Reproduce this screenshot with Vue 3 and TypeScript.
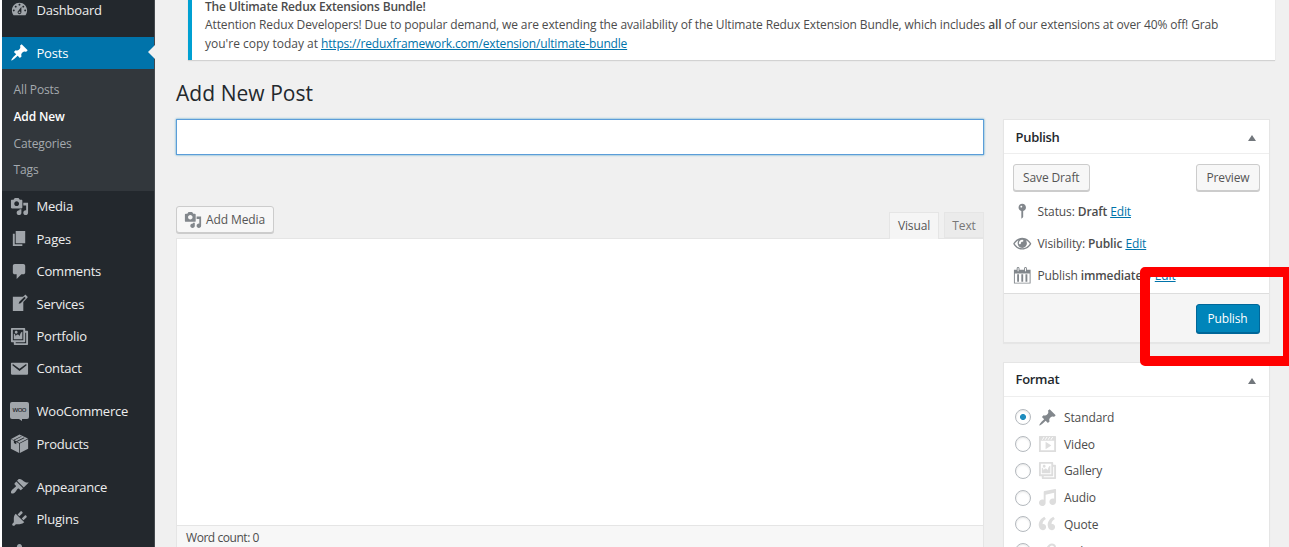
<script setup lang="ts">
import { ref } from 'vue'

interface MenuItem {
  label: string
  icon: string
  current?: boolean
  separatorAfter?: boolean
  children?: string[]
}

// 20x20 icon outlines
const icons: Record<string, string> = {
  dashboard: 'M3.76 16h12.48c1.1-1.37 1.76-3.11 1.76-5 0-4.42-3.58-8-8-8s-8 3.58-8 8c0 1.89.66 3.63 1.76 5zM10 4c.55 0 1 .45 1 1s-.45 1-1 1-1-.45-1-1 .45-1 1-1zM6 6c.55 0 1 .45 1 1s-.45 1-1 1-1-.45-1-1 .45-1 1-1zm8 0c.55 0 1 .45 1 1s-.45 1-1 1-1-.45-1-1 .45-1 1-1zm-5.37 5.55L12 7v6c0 1.1-.9 2-2 2s-2-.9-2-2c0-.57.24-1.08.63-1.45zM4 10c.55 0 1 .45 1 1s-.45 1-1 1-1-.45-1-1 .45-1 1-1zm12 0c.55 0 1 .45 1 1s-.45 1-1 1-1-.45-1-1 .45-1 1-1zm-5 3c0-.55-.45-1-1-1s-1 .45-1 1 .45 1 1 1 1-.45 1-1z',
  pin: 'M10.44 3.02l1.82-1.82 6.36 6.35-1.83 1.82c-1.05-.68-2.48-.57-3.41.36l-.75.75c-.92.93-1.04 2.35-.35 3.41l-1.83 1.82-2.41-2.41-2.8 2.79c-.42.42-3.38 2.71-3.8 2.29s1.86-3.39 2.28-3.81l2.79-2.79L4.1 9.36l1.83-1.82c1.05.69 2.48.57 3.4-.36l.75-.75c.93-.92 1.05-2.35.36-3.41z',
  media: 'M13 11V4c0-.55-.45-1-1-1h-1.67L9 1H5L3.67 3H2c-.55 0-1 .45-1 1v7c0 .55.45 1 1 1h10c.55 0 1-.45 1-1zM7 4.5c1.38 0 2.5 1.12 2.5 2.5S8.38 9.5 7 9.5 4.5 8.38 4.5 7 5.62 4.5 7 4.5zM14 6h5v10.5c0 1.38-1.12 2.5-2.5 2.5S14 17.88 14 16.5s1.12-2.5 2.5-2.5c.17 0 .34.02.5.05V9h-3V6zm-4 8.05V13h2v3.5c0 1.38-1.12 2.5-2.5 2.5S7 17.88 7 16.5 8.12 14 9.5 14c.17 0 .34.02.5.05z',
  page: 'M6 15V2h10v13H6zm-1 1h8v2H3V5h2v11z',
  comments: 'M5 2h9c1.1 0 2 .9 2 2v7c0 1.1-.9 2-2 2h-2l-5 5v-5H5c-1.1 0-2-.9-2-2V4c0-1.1.9-2 2-2z',
  write: 'M16.89 1.2l1.41 1.41c.39.39.39 1.02 0 1.41L14 8.33V18H3V3h10.67l1.8-1.8c.4-.39 1.03-.4 1.42 0zm-5.66 8.48l5.37-5.36-1.42-1.42-5.36 5.37-.71 2.12z',
  gallery: 'M16 4h1.96c.57 0 1.04.47 1.04 1.04v12.92c0 .57-.47 1.04-1.04 1.04H5.04C4.47 19 4 18.53 4 17.96V16H2.04C1.47 16 1 15.53 1 14.96V2.04C1 1.47 1.47 1 2.04 1h12.92c.57 0 1.04.47 1.04 1.04V4zM3 14h11V3H3v11zm5-8.5C8 4.67 7.33 4 6.5 4S5 4.67 5 5.5 5.67 7 6.5 7 8 6.33 8 5.5zm2 4.5s1-5 3-5v8H4V7c2 0 2 3 2 3s.33-2 2-2 2 2 2 2zm7 7V6h-1v8.96c0 .57-.47 1.04-1.04 1.04H6v1h11z',
  email: 'M2 4h16c.55 0 1 .45 1 1v10.5c0 .55-.45 1-1 1H2c-.55 0-1-.45-1-1V5c0-.55.45-1 1-1zm8 8.7l7.2-5.9c.3-.3.4-.7.1-1-.3-.4-.8-.4-1.1-.1L10 10.2 3.8 5.7c-.35-.3-.85-.25-1.1.1-.3.3-.2.7.1 1z',
  products: 'M10 .4l8.9 4.4L10 9.4 7.6 8.2l7.9-4-.9-.5-8 4-2-1 7.900-4-.9-.4-8 3.900-2.400-1zM.9 5.500l3.200 1.700v2.300l2.500 1.400V8.500l3 1.500v9.900L.9 15.600zm18.200 0v10.100l-8.700 4.300V10z',
  appearance: 'M14.48 11.06L7.41 3.99l1.5-1.5c.5-.56 2.3-.47 3.51.32 1.21.8 1.43 1.28 2.91 2.1 1.18.64 2.45 1.26 4.45.85zm-.71.71L6.7 4.7 4.93 6.47c-.39.39-.39 1.02 0 1.41l1.06 1.06c.39.39.39 1.03 0 1.42-.6.6-1.43 1.11-2.21 1.69-.35.26-.7.53-1.01.84C1.43 14.23.4 16.08 1.4 17.07c.99 1 2.84-.03 4.18-1.36.31-.31.58-.66.85-1.02.57-.78 1.08-1.61 1.69-2.21.39-.39 1.02-.39 1.41 0l1.06 1.06c.39.39 1.02.39 1.41 0z',
  plugins: 'M13.11 4.36L9.87 7.6 8 5.73l3.24-3.24c.35-.34 1.05-.2 1.56.32.52.51.66 1.21.31 1.55zm-8 1.77l.91-1.12 9.01 9.01-1.19.84c-.71.71-2.63 1.16-3.82 1.16H6.14L4.9 17.26c-.59.59-1.54.59-2.12 0-.59-.58-.59-1.53 0-2.12l1.24-1.24v-3.88c0-1.13.4-3.19 1.09-3.89zm7.26 3.97l3.24-3.24c.34-.35 1.04-.21 1.55.31.52.51.66 1.21.31 1.55l-3.24 3.25z',
  users: 'M10 9.25c-2.27 0-2.73-3.44-2.73-3.44C7 4.02 7.82 2 9.97 2c2.16 0 2.98 2.02 2.71 3.81 0 0-.41 3.44-2.68 3.44zm0 2.57L12.72 10c2.39 0 4.52 2.33 4.52 4.53v2.49s-3.65 1.13-7.24 1.13c-3.65 0-7.24-1.13-7.24-1.13v-2.49c0-2.25 1.94-4.48 4.47-4.48z',
  status: 'M14 6c0 1.86-1.28 3.41-3 3.86V16c0 1-2 2-2 2V9.86c-1.72-.45-3-2-3-3.86 0-2.21 1.79-4 4-4s4 1.79 4 4zM8 5c0 .55.45 1 1 1s1-.45 1-1-.45-1-1-1-1 .45-1 1z',
  visibility: 'M10 4C5.5 4 2 7 .2 10.5 2 14 5.5 16.8 10 16.8s8-2.8 9.8-6.3C18 7 14.5 4 10 4zM6 6.7A5.2 5.2 0 0 0 5 10c0 2.8 2.2 5 5 5s5-2.2 5-5c0-1.200-.4-2.400-1-3.300 1.700.9 3.200 2.200 4.200 3.800-1.700 2.800-4.700 4.900-8.200 4.900s-6.500-2.100-8.200-4.900C2.800 8.900 4.300 7.600 6 6.700zm4-.4c.8 0 1.200.4 1.200 1s-.5 1.100-1.200 1.100c-.8 0-1.500.7-1.500 1.500 0 .7-.5 1.200-1.100 1.200s-1-.5-1-1.200c0-2 1.600-3.600 3.600-3.600z',
  calendar: 'M15 4h4v15H1V4h3V2.5C4 1.67 4.67 1 5.5 1S7 1.67 7 2.5V4h5V2.5c0-.83.67-1.5 1.5-1.5s1.5.67 1.5 1.5zM5 2.5V5.5c0 .28.22.5.5.5s.5-.22.5-.5V2.5c0-.28-.22-.5-.5-.5s-.5.22-.5.5zm8 0V5.5c0 .28.22.5.5.5s.5-.22.5-.5V2.5c0-.28-.22-.5-.5-.5s-.5.22-.5.5zM18 18V8H2v10zM6.500 17V9h-2v8zm4.500 0V9H9v8zm4.500 0V9h-2v8z',
  video: 'M2 1h16c.55 0 1 .45 1 1v16l-18-.02V2c0-.55.45-1 1-1zm4 1L4 5h1l2-3H6zm4 0H9L7 5h1zm3 0h-1l-2 3h1zm3 0h-1l-2 3h1zm1 14V6H3v10h14zM8 7l6 4-6 4V7z',
  audio: 'M6.99 3.08l11.02-2c.55-.08.99.45.99 1V14.5c0 1.94-1.57 3.5-3.5 3.5S12 16.44 12 14.5c0-1.93 1.57-3.5 3.5-3.5.54 0 1.04.14 1.5.35V5.08l-9 2V16c-.24 1.7-1.74 3-3.5 3C2.57 19 1 17.44 1 15.5 1 13.57 2.57 12 4.5 12c.54 0 1.04.14 1.5.35V4.08c0-.55.44-.91.99-1z',
  quote: 'M8.54 12.74c0-.87-.24-1.61-.72-2.22-.73-.92-2.14-1.03-2.96-.85-.34-1.93 1.3-4.39 3.42-5.45L6.65 1.94C3.45 3.46.31 6.96.85 11.37 1.19 14.16 2.8 16 5.08 16c1 0 1.83-.29 2.48-.88.66-.59.98-1.38.98-2.38zm9.43 0c0-.87-.24-1.61-.72-2.22-.73-.92-2.14-1.03-2.96-.85-.34-1.93 1.3-4.39 3.42-5.45l-1.63-2.28c-3.2 1.52-6.34 5.02-5.8 9.43.34 2.79 1.95 4.63 4.23 4.63 1 0 1.83-.29 2.48-.88.66-.59.98-1.38.98-2.38z',
  link: 'M17.74 2.76c1.68 1.69 1.68 4.41 0 6.1l-1.53 1.52c-1.12 1.12-2.7 1.47-4.14 1.09l2.62-2.61.76-.77.76-.76c.84-.84.84-2.2 0-3.04-.84-.85-2.2-.85-3.04 0l-.77.76-3.38 3.38c-.37-1.44-.02-3.02 1.1-4.14l1.52-1.53c1.69-1.68 4.42-1.68 6.1 0zM8.59 13.43l5.34-5.34c.42-.42.42-1.1 0-1.52-.44-.43-1.13-.39-1.53 0l-5.33 5.34c-.42.42-.42 1.1 0 1.52.44.43 1.13.39 1.52 0zm-.76 2.29l4.14-4.15c.38 1.44.03 3.02-1.09 4.14l-1.52 1.53c-1.69 1.68-4.41 1.68-6.1 0-1.68-1.68-1.68-4.42 0-6.1l1.53-1.52c1.12-1.12 2.7-1.47 4.14-1.1l-4.14 4.15c-.85.84-.85 2.2 0 3.05.84.84 2.2.84 3.04 0z'
}

const menu: MenuItem[] = [
  { label: 'Dashboard', icon: 'dashboard', separatorAfter: true },
  { label: 'Posts', icon: 'pin', current: true, children: ['All Posts', 'Add New', 'Categories', 'Tags'] },
  { label: 'Media', icon: 'media' },
  { label: 'Pages', icon: 'page' },
  { label: 'Comments', icon: 'comments' },
  { label: 'Services', icon: 'write' },
  { label: 'Portfolio', icon: 'gallery' },
  { label: 'Contact', icon: 'email', separatorAfter: true },
  { label: 'WooCommerce', icon: 'woo' },
  { label: 'Products', icon: 'products', separatorAfter: true },
  { label: 'Appearance', icon: 'appearance' },
  { label: 'Plugins', icon: 'plugins' },
  { label: 'Users', icon: 'users' }
]

const formats = [
  { label: 'Standard', icon: 'pin' },
  { label: 'Video', icon: 'video' },
  { label: 'Gallery', icon: 'gallery' },
  { label: 'Audio', icon: 'audio' },
  { label: 'Quote', icon: 'quote' },
  { label: 'Link', icon: 'link' }
]

const title = ref('')
const format = ref('Standard')
const activePage = 'Add New'
</script>

<template>
  <div class="admin">
    <nav class="menu">
      <template v-for="item in menu" :key="item.label">
        <a class="menu-item" :class="{ 'menu-item--current': item.current }">
          <span class="menu-icon">
            <span v-if="item.icon === 'woo'" class="woo">WOO</span>
            <svg v-else viewBox="0 0 20 20"><path fill-rule="evenodd" :d="icons[item.icon]" /></svg>
          </span>
          {{ item.label }}
        </a>
        <div v-if="item.children" class="submenu">
          <a
            v-for="child in item.children"
            :key="child"
            :class="{ active: child === activePage }"
          >{{ child }}</a>
        </div>
        <div v-if="item.separatorAfter" class="separator"></div>
      </template>
    </nav>

    <main class="content">
      <div class="notice">
        <strong>The Ultimate Redux Extensions Bundle!</strong><br>
        <span>Attention Redux Developers! Due to popular demand, we are extending the availability of the Ultimate Redux Extension Bundle, which includes <b>all</b> of our extensions at over 40% off! Grab</span><br>
        <span class="notice-copy">you're copy today at</span> <a class="link notice-link">https://reduxframework.com/extension/ultimate-bundle</a>
      </div>

      <h1>Add New Post</h1>

      <div class="columns">
        <section class="editor-column">
          <input v-model="title" class="title" type="text">
          <div class="tools">
            <button class="button add-media">
              <svg viewBox="0 0 20 20"><path fill-rule="evenodd" :d="icons.media" /></svg>
              Add Media
            </button>
            <div class="tabs">
              <span class="tab tab--active">Visual</span>
              <span class="tab">Text</span>
            </div>
          </div>
          <div class="editor">
            <div class="editor-body"></div>
            <div class="editor-status">Word count: 0</div>
          </div>
        </section>

        <aside class="side-column">
          <div class="box">
            <h2>Publish <i class="toggle"></i></h2>
            <div class="publish-actions">
              <button class="button">Save Draft</button>
              <button class="button">Preview</button>
            </div>
            <div class="publish-row">
              <svg viewBox="0 0 20 20"><path fill-rule="evenodd" :d="icons.status" /></svg>
              <span>Status: <b>Draft</b> <a class="link">Edit</a></span>
            </div>
            <div class="publish-row">
              <svg viewBox="0 0 20 20"><path fill-rule="evenodd" :d="icons.visibility" /></svg>
              <span>Visibility: <b>Public</b> <a class="link">Edit</a></span>
            </div>
            <div class="publish-row">
              <svg viewBox="0 0 20 20"><path fill-rule="evenodd" :d="icons.calendar" /></svg>
              <span>Publish <b>immediately</b> <a class="link">Edit</a></span>
            </div>
            <div class="publish-footer">
              <button class="button button--primary">Publish</button>
            </div>
          </div>

          <div class="box">
            <h2>Format <i class="toggle"></i></h2>
            <div class="formats">
              <label
                v-for="item in formats"
                :key="item.label"
                :class="{ selected: item.label === format }"
              >
                <input v-model="format" type="radio" :value="item.label">
                <svg viewBox="0 0 20 20"><path fill-rule="evenodd" :d="icons[item.icon]" /></svg>
                {{ item.label }}
              </label>
            </div>
          </div>
        </aside>
      </div>
    </main>

    <div class="highlight"></div>
  </div>
</template>

<style>
body {
  background: #fff;
}
</style>

<style scoped>
* {
  box-sizing: border-box;
}

.admin {
  position: relative;
  display: flex;
  width: 1289px;
  height: 547px;
  padding-left: 2px;
  overflow: hidden;
  background: linear-gradient(90deg, #fff 2px, #f0f0f0 2px);
  color: #4c4c4c;
  font-family: "Open Sans", "Noto Sans", sans-serif;
  font-size: 12px;
  letter-spacing: -0.12px;
}

svg {
  flex: none;
  width: 19px;
  height: 19px;
  fill: #82878c;
}

.menu {
  flex: none;
  width: 153px;
  height: 560px;
  margin-top: -6px;
  background: #23282d;
  border-right: 1px solid #44494e;
}

.menu-item {
  display: flex;
  align-items: center;
  height: 32.4px;
  padding-bottom: 1px;
  color: #eee;
  font-size: 13px;
  letter-spacing: -0.2px;
}

.menu-item--current {
  position: relative;
  background: #0073aa;
  color: #fff;
}

.menu-item--current::after {
  content: "";
  position: absolute;
  top: 8.5px;
  right: -1px;
  border: 7.6px solid transparent;
  border-left-width: 0;
  border-right-color: #f0f0f0;
}

.menu-icon {
  display: flex;
  flex: none;
  justify-content: center;
  width: 34.5px;
}

.menu-icon svg {
  fill: #a0a5aa;
}

.menu-item--current svg {
  fill: #fff;
}

.woo {
  position: relative;
  width: 19px;
  height: 17px;
  margin-bottom: 1px;
  border-radius: 2px;
  background: #a0a5aa;
  color: #23282d;
  font-size: 6px;
  font-weight: 600;
  line-height: 17px;
  letter-spacing: -0.6px;
  text-align: center;
}

.woo::after {
  content: "";
  position: absolute;
  top: 17px;
  left: 9px;
  border-top: 2px solid #a0a5aa;
  border-left: 3px solid transparent;
}

.submenu {
  padding: 7.8px 0 6.5px;
  background: #32373c;
}

.submenu a {
  display: block;
  height: 26.8px;
  padding-left: 11.5px;
  color: #a5aaaf;
  line-height: 26.8px;
}

.submenu .active {
  color: #fff;
  font-weight: 600;
}

.separator {
  height: 10.5px;
}

.content {
  flex: 1;
  padding-left: 21px;
}

.notice {
  width: 1087px;
  height: 66px;
  margin: -6px 0 0 12px;
  padding: 3.5px 0 0 13px;
  border-left: 4px solid #00a0d2;
  background: #fff;
  box-shadow: 0 1px 1px rgba(0, 0, 0, 0.12);
  line-height: 18.5px;
  white-space: nowrap;
}

.notice strong,
b {
  font-weight: 600;
}

.notice strong {
  letter-spacing: -0.18px;
}

.notice-copy {
  letter-spacing: 0;
}

.notice-link {
  letter-spacing: -0.17px;
}

.link {
  color: #0073aa;
  text-decoration: underline;
}

h1 {
  margin: 18px 0 0;
  height: 41px;
  color: #23282d;
  font-size: 21px;
  font-weight: 400;
  line-height: 31px;
  letter-spacing: 0.05px;
}

.columns {
  display: flex;
  gap: 19px;
}

.editor-column {
  width: 808px;
}

.title {
  display: block;
  width: 808px;
  height: 36px;
  padding: 3px 8px;
  border: 1px solid #5b9dd9;
  outline: none;
  background: #fff;
  box-shadow: 0 0 2px rgba(30, 140, 190, 0.8);
  font: inherit;
  font-size: 20px;
}

.tools {
  display: flex;
  align-items: flex-start;
  justify-content: space-between;
  margin-top: 51px;
  height: 32px;
}

.button {
  display: flex;
  align-items: center;
  justify-content: center;
  height: 27px;
  padding: 0 9px;
  border: 1px solid #ccc;
  border-radius: 3px;
  background: #f7f7f7;
  box-shadow: 0 1px 0 #ccc;
  color: #555;
  font: inherit;
  letter-spacing: inherit;
  white-space: nowrap;
}

.add-media {
  gap: 4px;
  width: 98px;
  padding: 0 1px 0 0;
}

.add-media svg {
  width: 18px;
  height: 18px;
}

.tabs {
  display: flex;
  gap: 5px;
  margin-top: 6px;
}

.tab {
  width: 40px;
  height: 26px;
  border: 1px solid #e5e5e5;
  background: #ebebeb;
  color: #777;
  line-height: 26px;
  text-align: center;
}

.tab--active {
  position: relative;
  width: 50px;
  height: 27px;
  border-bottom: 0;
  background: #f5f5f5;
  color: #555;
}

.editor {
  border: 1px solid #e5e5e5;
  background: #fff;
}

.editor-body {
  height: 286px;
}

.editor-status {
  height: 40px;
  padding-left: 9px;
  border-top: 1px solid #e5e5e5;
  background: #f7f7f7;
  line-height: 24px;
  letter-spacing: -0.45px;
}

.side-column {
  width: 267px;
}

.box {
  margin-bottom: 19px;
  border: 1px solid #e5e5e5;
  background: #fff;
  box-shadow: 0 1px 1px rgba(0, 0, 0, 0.04);
}

h2 {
  display: flex;
  align-items: center;
  justify-content: space-between;
  height: 34px;
  margin: 0 0 10px;
  padding: 0 13px 0 11.5px;
  border-bottom: 1px solid #eee;
  color: #23282d;
  font-size: 13px;
  font-weight: 600;
  letter-spacing: -0.3px;
}

.toggle {
  margin-top: 3px;
  border: 4px solid transparent;
  border-top-width: 0;
  border-bottom: 6px solid #72777c;
}

.publish-actions {
  display: flex;
  justify-content: space-between;
  height: 31px;
  padding: 0 9.5px 0 9px;
}

.publish-row {
  display: flex;
  align-items: center;
  gap: 6px;
  height: 32.3px;
  padding-left: 9px;
}

.publish-row svg {
  width: 18.5px;
  height: 18.5px;
}

.publish-footer {
  display: flex;
  justify-content: flex-end;
  height: 49px;
  margin-top: 1px;
  padding: 10px 9.5px;
  border-top: 1px solid #ddd;
  background: #f5f5f5;
}

.button--primary {
  width: 64px;
  height: 29px;
  border-color: #006799;
  background: #0085ba;
  box-shadow: 0 1px 0 #006799;
  color: #fff;
}

.formats {
  height: 190px;
  margin-top: -3px;
}

.formats label {
  display: flex;
  align-items: center;
  height: 26.8px;
  padding-left: 11px;
}

.formats input {
  flex: none;
  width: 16px;
  height: 16px;
  margin: 0 7px 0 0;
  appearance: none;
  border: 1px solid #b4b9be;
  border-radius: 50%;
  background: #fff;
  box-shadow: inset 0 1px 2px rgba(0, 0, 0, 0.1);
}

.formats input:checked {
  background: radial-gradient(circle, #1e8cbe 2.6px, #fff 3.4px);
}

.formats svg {
  margin-right: 7px;
  fill: #ddd;
}

.formats .selected svg {
  fill: #82878c;
}

.highlight {
  position: absolute;
  top: 267px;
  left: 1140px;
  width: 153px;
  height: 99px;
  border: 10px solid #f00;
  border-radius: 5px;
}
</style>
